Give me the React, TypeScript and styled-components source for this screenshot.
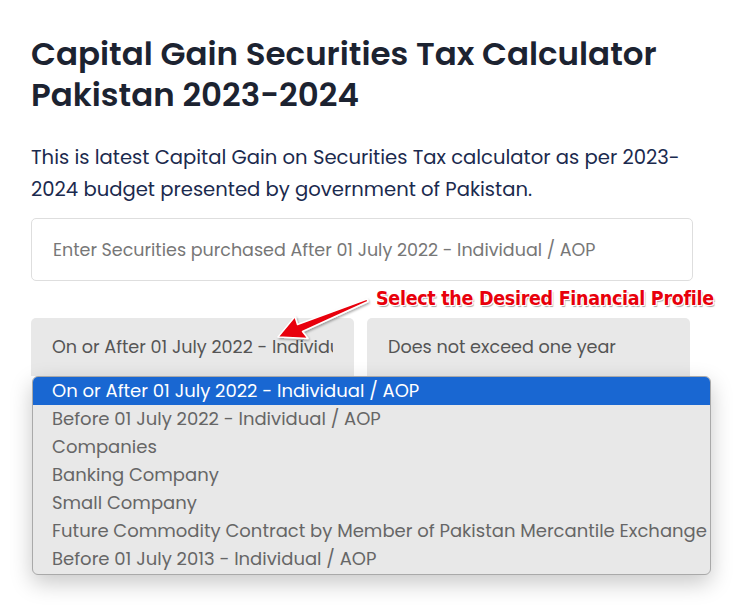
import React from 'react';
import styled, { createGlobalStyle } from 'styled-components';

const GlobalStyle = createGlobalStyle`
  html, body { margin: 0; padding: 0; background: #ffffff; }
  body { font-family: 'Poppins', 'Inter', 'Noto Sans', sans-serif; }
`;

const Page = styled.div`
  box-sizing: border-box;
  width: 739px;
  min-height: 607px;
  padding: 33px 47px 0 31px;
`;

const Title = styled.h1`
  margin: 0;
  font-size: 32.5px;
  line-height: 41px;
  font-weight: 600;
  color: #1c2331;
`;

const Lead = styled.p`
  margin: 26px 0 0;
  font-size: 19.6px;
  line-height: 32px;
  font-weight: 400;
  color: #1b2a4e;
  max-width: 672px;
`;

const Input = styled.input`
  display: block;
  box-sizing: border-box;
  width: 662px;
  height: 63px;
  margin-top: 13px;
  padding: 0 21px;
  border: 1px solid #dedede;
  border-radius: 5px;
  font-family: inherit;
  font-size: 17.5px;
  color: #333;
  background: #fff;
  &::placeholder { color: #777; }
`;

const FieldRow = styled.div`
  position: relative;
  display: grid;
  grid-template-columns: 323px 323px;
  column-gap: 13px;
  margin-top: 37px;
`;

const Select = styled.div`
  height: 58px;
  display: flex;
  align-items: center;
  padding: 0 21px;
  background: #e8e8e8;
  border-radius: 5px 5px 0 0;
  font-size: 17.6px;
  color: #555;
`;

const SelectValue = styled.span`
  flex: 1;
  min-width: 0;
  white-space: nowrap;
  overflow: hidden;
`;

const Callout = styled.div`
  position: absolute;
  left: 345px;
  top: -31px;
  font-family: 'DejaVu Sans Condensed', 'DejaVu Sans', sans-serif;
  font-weight: 700;
  font-size: 19.5px;
  letter-spacing: -0.3px;
  color: #e8000b;
  white-space: nowrap;
  text-shadow:
    1px 1px 0 #fff, -1px -1px 0 #fff, 1px -1px 0 #fff, -1px 1px 0 #fff,
    1.5px 1.5px 1px rgba(0, 0, 0, 0.35);
`;

const Arrow = styled.svg`
  position: absolute;
  left: 240px;
  top: -22px;
  overflow: visible;
`;

const Menu = styled.ul`
  position: absolute;
  left: 1px;
  top: 58px;
  z-index: 2;
  width: 679px;
  box-sizing: border-box;
  margin: 0;
  padding: 0 0 1px;
  list-style: none;
  background: #e8e8e8;
  border: 1px solid #a9a9a9;
  border-radius: 6px;
  overflow: hidden;
  box-shadow: 0 8px 22px rgba(0, 0, 0, 0.22);
`;

const Option = styled.li<{ active?: boolean }>`
  height: 28px;
  line-height: 28px;
  padding: 0 19px;
  font-size: 18px;
  white-space: nowrap;
  background: ${({ active }) => (active ? '#1967d2' : 'transparent')};
  color: ${({ active }) => (active ? '#ffffff' : '#666666')};
`;

const options = [
  'On or After 01 July 2022 - Individual / AOP',
  'Before 01 July 2022 - Individual / AOP',
  'Companies',
  'Banking Company',
  'Small Company',
  'Future Commodity Contract by Member of Pakistan Mercantile Exchange',
  'Before 01 July 2013 - Individual / AOP',
];

const arrowShape = 'M7 41 L24 20.5 L26.5 28.5 L96 3 L97 5.5 L31.5 35.5 L37 42.5 Z';

export default function App() {
  return (
    <>
      <GlobalStyle />
      <Page>
        <Title>Capital Gain Securities Tax Calculator Pakistan 2023-2024</Title>
        <Lead>
          This is latest Capital Gain on Securities Tax calculator as per 2023-2024 budget presented by
          government of Pakistan.
        </Lead>
        <Input placeholder="Enter Securities purchased After 01 July 2022 - Individual / AOP" />
        <FieldRow>
          <Select>
            <SelectValue>On or After 01 July 2022 - Individual / AOP</SelectValue>
          </Select>
          <Select>
            <SelectValue>Does not exceed one year</SelectValue>
          </Select>
          <Callout>Select the Desired Financial Profile</Callout>
          <Arrow width="100" height="50" viewBox="0 0 100 50">
            <defs>
              <filter id="arrow-shadow" x="-20%" y="-20%" width="140%" height="160%">
                <feDropShadow dx="1" dy="1.5" stdDeviation="0.8" floodColor="#000" floodOpacity="0.35" />
              </filter>
            </defs>
            <path
              d={arrowShape}
              fill="#e8000b"
              stroke="#ffffff"
              strokeWidth="1.5"
              strokeLinejoin="round"
              filter="url(#arrow-shadow)"
            />
          </Arrow>
          <Menu>
            {options.map((o, i) => (
              <Option key={o} active={i === 0}>{o}</Option>
            ))}
          </Menu>
        </FieldRow>
      </Page>
    </>
  );
}
